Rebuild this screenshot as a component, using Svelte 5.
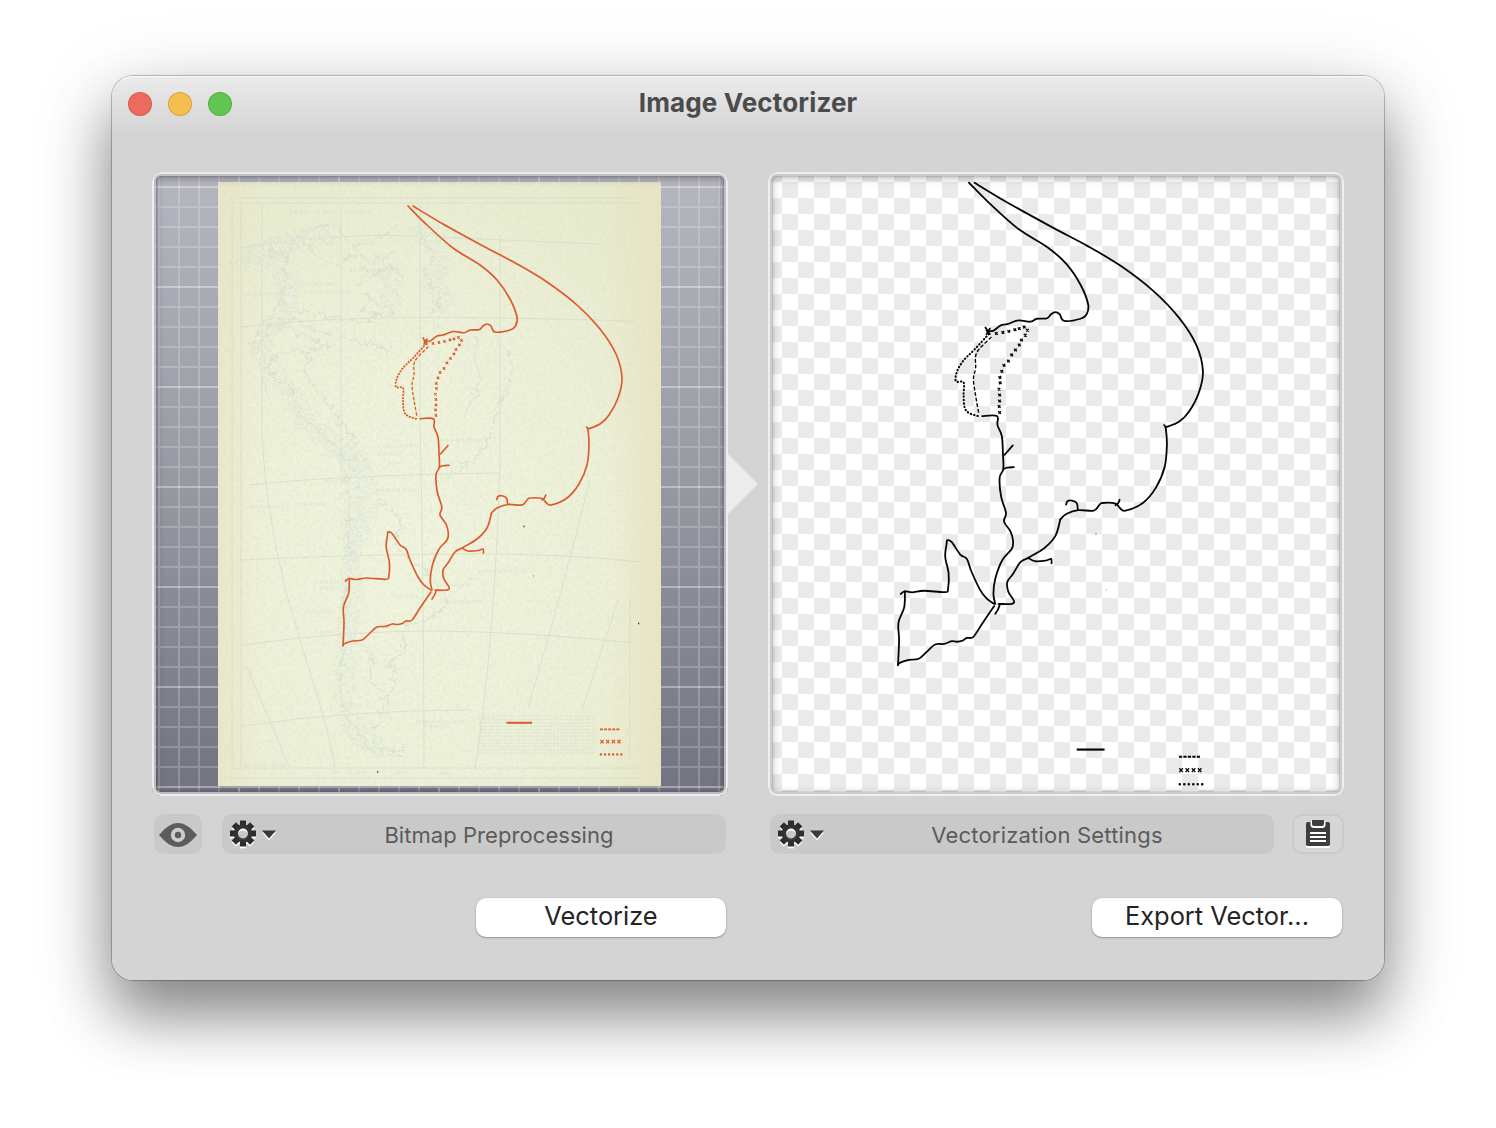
<script>
  // Converts a list of points into a smooth Catmull-Rom path
  function smooth(s) {
    const p = s.trim().split(/\s+/).map((q) => q.split(',').map(Number));
    let d = `M${p[0][0]} ${p[0][1]}`;
    for (let i = 0; i < p.length - 1; i++) {
      const a = p[i - 1] ?? p[i];
      const b = p[i];
      const c = p[i + 1];
      const e = p[i + 2] ?? c;
      const k = 6;
      d += `C${b[0] + (c[0] - a[0]) / k} ${b[1] + (c[1] - a[1]) / k} ${c[0] - (e[0] - b[0]) / k} ${c[1] - (e[1] - b[1]) / k} ${c[0]} ${c[1]}`;
    }
    return d;
  }

  const routes = [
    '413,206 443,224 483,246 517,264 547,282 577,305 600,329 616,354 622,378 618,398 609,415 600,424 588,429',
    '586.5,427 588,430 589,445 587,465 579,484 567,498 551,505 546,502.5 542,498.5 530,498 527,500 522,505 508,504.5 497,508 491.5,513',
    '491.5,513 487,528 477,539 462,548 455,552 448,563 443,570 444,579 449,587 447,590 435,590',
    '462,548 468,551 478,550.5 483,549 483.5,553',
    '496.8,499.5 498,496.5 502,495.8 506.5,498 507.5,503.5',
    '542,500 544.5,498 545.8,495',
    '408,206 427,225 453,248 480,265 497,280 510,299 517,317 515.5,326 510,330 495,332 491,326 487,324 483,326 479,329.7 470,330 464,332.7 453,331.5 443,335 437,336 430,341 424,341',
    '423,338 427,344',
    '427,339 424,344',
    '420,418.7 433.5,418.7 434,427 438,437 439,453 439.3,467 436,475 437.3,492 441.8,507 440,515 446,524 448.3,533 447,540 438.5,550 432,567 430.3,581 432,590',
    '440.5,454 448,445.5',
    '439.5,467 443,465.8 449,465.3',
    '431,590 424,585 418,577 410,560 406,549 400,545 392,533.5 388,532 387.5,535 386.2,547 389.3,562 388.8,576 386,579.3 367,578 356,579.5 349,578.5 345.5,581',
    '349.3,579 348.7,593 343.4,607 344,623 343,646',
    '343,645 346,643 353,641 362,640 369,634 377,627 385,626.5 392,624 397,624.5 402,623.5 406,621 412,620 420,608 431,592',
    '436,591 434.5,595 432,599'
  ];
  const dotted = '426,344 413,358 403,368 397,378 396,387 403,388 403,400 404,411 408,416 417,419';
  const dashed = '428,347 415,361 414,375 412,385 414,400 417,417';
  const marks = '433,343.5 439,342.5 444.5,341.5 450,340 454,339 458.5,337.5 461.5,340.5 459.5,345 456,349.5 454,354 450.5,358.5 447,363 444,368.5 440,372.5 438,378 436.3,383.5 436.5,388.5 435.5,394.3 436,399.5 436,405 435.6,410 436,415.5'
    .split(' ').map((q) => q.split(',').map(Number));
  const legendMarks = [602, 607.7, 613.4, 619];

  // Faint cartography left on the paper
  const coast = [
    '232,263 255,258 270,252 284,256 286,275 280,300 268,325 261,350 272,372 290,390 302,415 322,435 342,455 346,480 350,510 348,540 350,570 345,600 343,640 340,690 352,725 380,755 405,752',
    '282,262 292,246 304,235 322,226 336,228 345,238 360,248 378,238 396,226',
    '287,316 306,326 331,335 350,339 376,345 390,350',
    '281,318 300,336 318,344 305,362 312,385 330,405 342,425 360,445',
    '400,262 385,270 360,282 372,300 394,312 380,316 362,308',
    '350,640 372,655 370,680 388,695 380,715 372,740 388,750 406,748',
    '390,625 420,622 442,610 444,596 425,570',
    '505,350 512,365 509,390 500,400 492,430 478,455 460,470 440,480',
    '480,335 475,360 480,380 470,405 462,420',
    '420,230 432,252 426,276 440,296 430,316 442,330',
    '398,632 404,650 390,665 396,685 380,700',
    '250,345 262,330 286,322 300,312 330,316 360,322 385,310',
    '302,240 318,256 340,262 356,254 372,262 398,250',
    '270,400 262,380 276,356 296,350 312,352 330,345',
    '380,500 400,520 396,545 410,560 430,572'
  ];
  const bands = [
    '266,255 288,285 282,310 268,330 262,350 275,375 295,400 310,425 340,448 352,480 350,520 352,560 350,600 345,650 345,700 360,735 385,750',
    '345,445 362,470 372,500 360,530 350,560',
    '410,225 440,250 432,280 450,310',
    '245,258 270,248 300,240 330,232',
    '370,262 395,280 385,310'
  ];
  const meridians = 'M236 198H630M236 203H640M232 195V770M241 206V768M262 205V440Q268 540 300 640T335 768M341 205V470M420 205V420Q424 600 424 768M500 235V460M500 460Q495 640 475 770M590 480Q560 600 528 708M240 248Q340 232 420 236T600 244M240 327Q340 315 500 318T630 322M250 485Q340 475 500 473M240 560Q340 555 450 554T640 562M242 645Q350 630 440 631T634 643M242 726Q350 710 470 710M246 665 287 762M630 600V760M618 600 582 710M234 768H640M230 778H640';
  const labels = 'M290 212H310M318 212H335M345 212H372M270 238H300M243 294H282M300 284H338M304 292H350M350 270H400M378 454H402M388 463H402M322 455H340M325 481H345M295 504H325M250 507H284M315 582H342M320 588H338M394 596H418M305 612H335M316 632H336M478 571H527M468 579H480M440 585H470M440 602H482M416 722H464M425 726H450M244 765H292M286 773H296M332 773H340M350 773H365M395 773H410M440 773H450M440 440H484M376 490H420M378 446H420';
  const gearTeeth = [0, 45, 90, 135, 180, 225, 270, 315];
</script>

{#snippet trace()}
  <g class="ink">
    {#each routes as r}<path d={smooth(r)} />{/each}
    <path class="dots" d={smooth(dotted)} />
    <path class="dashes" d={smooth(dashed)} />
    {#each marks as m}<path class="mark" d="M{m[0] - 1.4} {m[1] - 1.1}l2.7 2.2m-.3-2.4l-2 2.5" />{/each}
    <path class="rule" d="M506.5 722.8H532" />
    <path class="legend-dash" d="M600 729.3H619.5" />
    {#each legendMarks as x}<path class="mark" d="M{x - 1.6} 739.8l3.2 3.6m0-3.6l-3.2 3.6" />{/each}
    <path class="legend-dots" d="M600.8 754.5H622" />
  </g>
{/snippet}

{#snippet gearMenu()}
  <svg class="gear" viewBox="0 0 50 34" aria-hidden="true">
    <defs>
      <linearGradient id="metal" x1="0" y1="4" x2="0" y2="30" gradientUnits="userSpaceOnUse">
        <stop offset="0" stop-color="#2c2c2c" /><stop offset="1" stop-color="#484848" />
      </linearGradient>
    </defs>
    {#each ['light', 'dark'] as tone}
      <g class={tone}>
        <circle class="wheel" cx="15" cy="16.5" r="7.1" />
        {#each gearTeeth as a}<path transform="rotate({a} 15 16.5)" d="M12 10V3.5H18V10Z" />{/each}
        <path d="M34 13.6H48L41 21.4Z" />
      </g>
    {/each}
  </svg>
{/snippet}

<main class="stage">
  <section class="window">
    <header class="titlebar">
      <div class="lights"><i class="red"></i><i class="yellow"></i><i class="green"></i></div>
      <h1>Image Vectorizer</h1>
    </header>

    <div class="columns">
      <div class="column">
        <div class="well">
          <svg viewBox="152 172 576 624">
            <defs>
              <linearGradient id="slate" x1="0" y1="0" x2="0" y2="1">
                <stop offset="0" stop-color="#b5b6c0" /><stop offset=".5" stop-color="#9699a2" /><stop offset="1" stop-color="#727380" />
              </linearGradient>
              <pattern id="grid" x="138" y="186" width="100" height="100" patternUnits="userSpaceOnUse">
                <path class="minor" d="M21 0V100M41 0V100M61 0V100M81 0V100M0 21H100M0 41H100M0 61H100M0 81H100" />
                <path class="major" d="M1 0V100M0 1H100" />
              </pattern>
              <radialGradient id="paper" cx=".42" cy=".62" r=".8">
                <stop offset="0" stop-color="#f1f5df" /><stop offset=".55" stop-color="#eef1da" /><stop offset="1" stop-color="#e6e9ca" />
              </radialGradient>
              <linearGradient id="edge" x1="0" y1="0" x2="1" y2="0">
                <stop offset="0" stop-color="#ebe4c8" stop-opacity=".8" /><stop offset=".1" stop-color="#ebe4c8" stop-opacity="0" />
                <stop offset=".88" stop-color="#eae2c0" stop-opacity="0" /><stop offset="1" stop-color="#eae2c0" stop-opacity=".8" />
              </linearGradient>
              <filter id="grain" x="0" y="0" width="1" height="1" color-interpolation-filters="sRGB">
                <feTurbulence type="fractalNoise" baseFrequency=".3" numOctaves="3" seed="4" />
                <feColorMatrix values="0 0 0 0 .86  0 0 0 0 .88  0 0 0 0 .76  .9 0 0 0 -.34" />
              </filter>
              <filter id="rough" x="-.1" y="-.1" width="1.2" height="1.2" color-interpolation-filters="sRGB">
                <feTurbulence type="fractalNoise" baseFrequency=".12" numOctaves="3" seed="8" />
                <feDisplacementMap in="SourceGraphic" scale="14" xChannelSelector="R" yChannelSelector="G" />
              </filter>
            </defs>
            <rect x="152" y="172" width="576" height="624" fill="url(#slate)" />
            <rect x="152" y="172" width="576" height="624" fill="url(#grid)" />
            <rect x="218" y="182" width="443" height="604" fill="url(#paper)" />
            <rect x="218" y="182" width="443" height="604" fill="url(#edge)" />
            <rect x="218" y="182" width="443" height="604" filter="url(#grain)" />
            <g class="faint">
              <path d={meridians} />
              <path class="label" d={labels} />
              <g filter="url(#rough)">
                {#each bands as b}<path class="band" d={smooth(b)} /><path class="band pale" d={smooth(b)} />{/each}
                {#each coast as c}<path class="coast" d={smooth(c)} />{/each}
              </g>
              {#each Array(12) as _, i}<path class="notes" d="M478 {716 + i * 3.4}H596" />{/each}
            </g>
            <g class="specks"><path d="M638 623.5h1.3M377 772h1.2" /><path class="dim" d="M533 576h1" /><path class="rust" d="M523 526.5h2" /></g>
            <g class="orange">{@render trace()}</g>
          </svg>
          <span class="bezel"></span>
        </div>
        <div class="controls">
          <button class="eye" aria-label="Preview">
            <svg viewBox="0 0 38 26"><path fill="#5c5c5c" d="M0 13C8 4 13 1 19 1S30 4 38 13C30 22 25 25 19 25S8 22 0 13Z" /><circle cx="19" cy="13" r="5.2" fill="#5c5c5c" stroke="#cbcbcb" stroke-width="4" /></svg>
          </button>
          <button class="bar">{@render gearMenu()}<span>Bitmap Preprocessing</span></button>
        </div>
        <button class="push">Vectorize</button>
        <svg class="pointer" viewBox="0 0 30 60"><path d="M0 0 30 30 0 60Z" fill="#ececec" /></svg>
      </div>

      <div class="column right">
        <div class="well">
          <svg viewBox="768 172 576 624">
            <defs>
              <pattern id="checker" x="782" y="182" width="32" height="32" patternUnits="userSpaceOnUse">
                <rect width="32" height="32" fill="#fff" /><path d="M0 0H16V32H32V16H0Z" fill="#eaeaea" />
              </pattern>
            </defs>
            <rect x="768" y="172" width="576" height="624" fill="url(#checker)" />
            <g class="black" transform="translate(523.1 -43.2) scale(1.093 1.0968)">{@render trace()}</g>
            <g class="specks faded"><path d="M1095 534h2M1106 590h1M946 539.5h2" /></g>
          </svg>
          <span class="bezel"></span>
        </div>
        <div class="controls">
          <button class="bar">{@render gearMenu()}<span>Vectorization Settings</span></button>
          <button class="clip" aria-label="Copy to clipboard">
            <svg viewBox="0 0 26 30">
              <rect x="1" y="4.5" width="24" height="24.5" rx="1.8" fill="#fff" />
              <rect x="1" y="3" width="24" height="24" rx="1.8" fill="#3d3d3d" />
              <path d="M5.5 2.5V5.5Q5.500 9 9 9H17Q20.500 9 20.5 5.5V2.5Z" fill="#fff" />
              <path d="M7 1H19V5Q19 7 17 7H9Q7 7 7 5Z" fill="#3d3d3d" />
              <path d="M5 14H21M5 18H21M5 22H21" stroke="#fff" stroke-width="1.9" />
            </svg>
          </button>
        </div>
        <button class="push">Export Vector...</button>
      </div>
    </div>
  </section>
</main>

<style>
  :global(body) { margin: 0; background: #fff; overflow: hidden; }
  .stage { box-sizing: border-box; width: 1496px; height: 1128px; padding: 76px 112px; font-family: Inter, 'Liberation Sans', sans-serif; }
  .window {
    box-sizing: border-box; width: 1272px; height: 904px; border-radius: 21px;
    background: linear-gradient(#ebebeb 0, #e5e5e5 16px, #d4d4d4 58px, #d4d4d4);
    box-shadow: inset 0 2px 1px -1px #fafafa, 0 0 0 1px rgba(0, 0, 0, .2), 0 0 3px rgba(0, 0, 0, .1), 0 36px 60px rgba(0, 0, 0, .4), 0 16px 84px rgba(0, 0, 0, .17);
  }
  .titlebar { height: 56px; display: grid; grid-template-columns: 1fr auto 1fr; align-items: center; }
  .lights { display: flex; gap: 16px; padding-left: 16px; }
  .lights i { width: 24px; height: 24px; border-radius: 50%; box-shadow: inset 0 0 0 1px rgba(110, 50, 0, .2); }
  .red { background: #ed6a5f; }
  .yellow { background: #f5bf4f; }
  .green { background: #61c554; }
  h1 { margin: -2px 0 0; font-size: 26px; line-height: 32px; font-weight: 700; color: #4b4b4b; letter-spacing: .14px; white-space: nowrap; }
  .columns { display: flex; gap: 40px; padding: 40px 40px 0; }
  .column { width: 576px; position: relative; }
  .well { position: relative; width: 576px; height: 624px; border-radius: 9px; overflow: hidden; }
  .well > svg { display: block; width: 576px; height: 624px; }
  .bezel {
    position: absolute; inset: 0; border-radius: 9px;
    box-shadow: inset 0 0 0 2px #ededed, inset 0 0 0 4px rgba(205, 205, 209, .85), inset 0 0 2px 4.5px rgba(60, 60, 70, .4), inset 0 2px 8px 4px rgba(45, 45, 55, .38);
  }
  .right .bezel { box-shadow: inset 0 0 0 2px #efefef, inset 0 0 0 4px rgba(210, 210, 210, .85), inset 0 0 2px 4.5px rgba(80, 80, 80, .35), inset 0 2px 9px 4px rgba(60, 60, 60, .32); }
  .minor { stroke: #fff; stroke-opacity: .2; stroke-width: 2; }
  .major { stroke: #fff; stroke-opacity: .36; stroke-width: 2; }
  .ink { fill: none; stroke-width: 1.65; stroke-linecap: round; stroke-linejoin: round; }
  .orange { stroke: #db5a2b; }
  .black { stroke: #060606; }
  .ink .dots { stroke-dasharray: .4 2.7; stroke-width: 1.9; }
  .ink .dashes { stroke-dasharray: 2.4 2.7; stroke-width: 1.3; }
  .ink .mark { stroke-width: 1.2; stroke-linecap: butt; }
  .ink .rule { stroke-width: 2; stroke-linecap: butt; }
  .ink .legend-dash { stroke-width: 1.8; stroke-dasharray: 2.9 1.2; stroke-linecap: butt; }
  .ink .legend-dots { stroke-width: 2.3; stroke-dasharray: .1 4; }
  .faint { fill: none; stroke: #cdd8c8; stroke-width: 1; opacity: .62; }
  .faint .label { stroke-width: 3; stroke-dasharray: 2 1.5 1 1; opacity: .55; }
  .faint .band { stroke-width: 20; stroke-dasharray: 1.5 2; opacity: .5; }
  .faint .pale { stroke: #e9f3f6; stroke-width: 12; stroke-dasharray: 1 4; opacity: .95; }
  .faint .coast { stroke-width: 1.3; }
  .faint .notes { stroke-width: 1.6; stroke-dasharray: 3 1 5 1 2 1; opacity: .5; }
  .specks { stroke: #333; stroke-width: 1.3; }
  .dim { opacity: .4; }
  .rust { stroke: #a97c3c; }
  .faded { opacity: .35; }
  .pointer { position: absolute; left: 576px; top: 282px; width: 30px; height: 60px; }
  .controls { display: flex; height: 40px; margin: 18px 0 0; padding: 0 2px; gap: 20px; }
  button { border: 0; padding: 0; font: inherit; }
  .eye, .bar { background: #c9c9c9; border-radius: 10px; }
  .eye { width: 48px; display: grid; place-items: center; }
  .eye svg { width: 38px; height: 26px; padding-top: 1px; }
  .bar { flex: 1; position: relative; color: #5b5b5b; font-size: 22px; line-height: 40px; padding-left: 50px; }
  .bar span { display: block; letter-spacing: .06px; padding-top: 1px; }
  .right .bar span { letter-spacing: .2px; }
  .gear { position: absolute; left: 6px; top: 3px; width: 50px; height: 34px; }
  .light { fill: #fff; stroke: #fff; transform: translateY(1.8px); }
  .dark { fill: url(#metal); stroke: url(#metal); }
  .gear path { stroke: none; }
  .wheel { fill: none; stroke-width: 4.4; }
  .right .controls { padding-right: 0; gap: 18px; }
  .clip { width: 52px; box-sizing: border-box; border: 2px solid #cacaca; border-radius: 10px; background: #d6d6d6; display: grid; place-items: center; }
  .clip svg { width: 26px; height: 30px; }
  .push {
    display: block; width: 250px; height: 39px; margin: 43.5px 2px 0 auto; border-radius: 10px; background: #fff; color: #242424;
    font-size: 25.4px; line-height: 36px; padding-bottom: 2px; box-shadow: 0 1px 2px rgba(0, 0, 0, .3), 0 0 1px rgba(0, 0, 0, .2);
  }
</style>
